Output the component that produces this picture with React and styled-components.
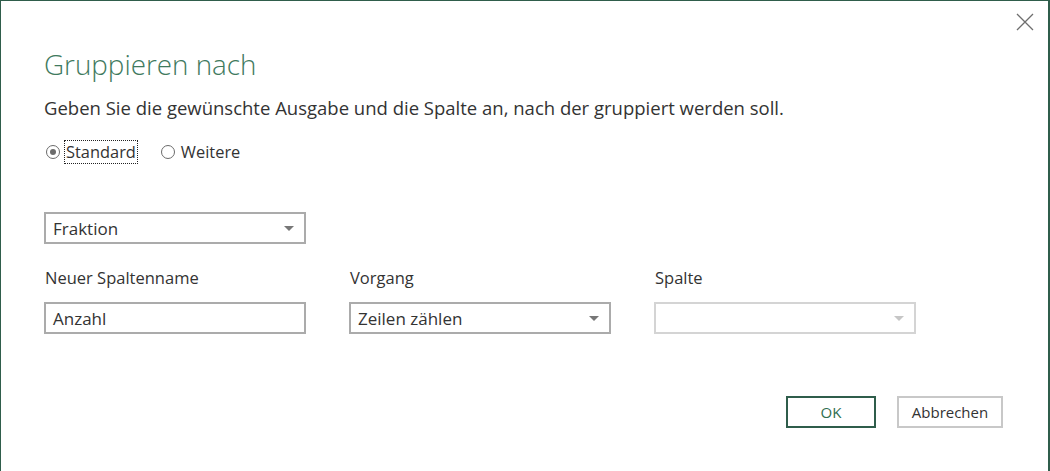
import React, { useState } from "react";
import styled, { createGlobalStyle } from "styled-components";

const Global = createGlobalStyle`
  html, body {
    margin: 0;
    padding: 0;
    background: #ffffff;
  }
  body {
    font-family: "Open Sans", "Noto Sans", "Liberation Sans", sans-serif;
    color: #333333;
  }
`;

const Dialog = styled.div`
  box-sizing: border-box;
  width: 1050px;
  height: 471px;
  border: 1px solid #2f5d4b;
  border-bottom: none;
  border-right-width: 2px;
  background: #ffffff;
  position: relative;
  padding: 44px 0 0 43px;
`;

const Close = styled.button`
  position: absolute;
  top: 11px;
  right: 13px;
  width: 20px;
  height: 20px;
  padding: 0;
  border: none;
  background: transparent;
  cursor: pointer;
  display: flex;
  align-items: center;
  justify-content: center;
`;

const Title = styled.h1`
  margin: 0;
  font-weight: 300;
  font-size: 27.8px;
  line-height: 38px;
  color: #3f7a5e;
`;

const Lead = styled.p`
  margin: 12px 0 0;
  font-size: 18.5px;
  line-height: 26px;
  color: #333333;
`;

const RadioRow = styled.div`
  display: flex;
  gap: 24px;
  margin-top: 20px;
  padding-left: 2px;
  font-size: 16.4px;
  line-height: 22px;
`;

const RadioLabel = styled.label`
  display: flex;
  align-items: center;
  gap: 5px;
  cursor: pointer;
`;

const Dot = styled.span`
  box-sizing: border-box;
  width: 14px;
  height: 14px;
  border-radius: 50%;
  border: 1px solid #6b6b6b;
  display: flex;
  align-items: center;
  justify-content: center;
  &::after {
    content: "";
    width: 6px;
    height: 6px;
    border-radius: 50%;
    background: ${(p) => (p.checked ? "#6b6b6b" : "transparent")};
  }
`;

const RadioText = styled.span`
  outline: ${(p) => (p.focused ? "1px dotted #222" : "none")};
  padding: 0 1px;
`;

const Field = styled.div`
  box-sizing: border-box;
  width: 262px;
  height: 32px;
  border: 2px solid ${(p) => (p.disabled ? "#d4d4d4" : "#ababab")};
  display: flex;
  align-items: center;
  justify-content: space-between;
  padding: 0 10px 0 7px;
  font-size: 17px;
  color: #333333;
  background: #ffffff;
`;

const Caret = styled.span`
  width: 0;
  height: 0;
  border-left: 5px solid transparent;
  border-right: 5px solid transparent;
  border-top: 5px solid ${(p) => (p.disabled ? "#c6c6c6" : "#777777")};
`;

const GroupBy = styled.div`
  margin-top: 49px;
`;

const Columns = styled.div`
  display: grid;
  grid-template-columns: repeat(3, 262px);
  column-gap: 43px;
  margin-top: 22px;
`;

const Column = styled.div`
  display: flex;
  flex-direction: column;
  gap: 12px;
`;

const Label = styled.div`
  font-size: 16.5px;
  line-height: 24px;
  padding-left: 1px;
  color: #333333;
`;

const Footer = styled.div`
  display: flex;
  justify-content: flex-end;
  gap: 21px;
  margin-top: 62px;
  padding-right: 45px;
`;

const Button = styled.button`
  box-sizing: border-box;
  height: 32px;
  width: ${(p) => (p.primary ? "90px" : "106px")};
  border: 2px solid ${(p) => (p.primary ? "#2f5d4b" : "#c8c8c8")};
  background: #ffffff;
  color: ${(p) => (p.primary ? "#2f6e50" : "#333333")};
  font-family: inherit;
  font-size: 15px;
  padding: 0;
  cursor: pointer;
`;

const Select = ({ value, disabled }) => (
  <Field disabled={disabled}>
    <span>{value}</span>
    <Caret disabled={disabled} />
  </Field>
);

const App = () => {
  const [mode, setMode] = useState("standard");
  return (
    <>
      <Global />
      <Dialog>
        <Close aria-label="Schließen">
          <svg width="18" height="18" viewBox="0 0 18 18">
            <path d="M1 1 L17 17 M17 1 L1 17" stroke="#6e6e6e" strokeWidth="1.3" fill="none" />
          </svg>
        </Close>
        <Title>Gruppieren nach</Title>
        <Lead>Geben Sie die gewünschte Ausgabe und die Spalte an, nach der gruppiert werden soll.</Lead>
        <RadioRow>
          <RadioLabel onClick={() => setMode("standard")}>
            <Dot checked={mode === "standard"} />
            <RadioText focused={mode === "standard"}>Standard</RadioText>
          </RadioLabel>
          <RadioLabel onClick={() => setMode("weitere")}>
            <Dot checked={mode === "weitere"} />
            <RadioText focused={mode === "weitere"}>Weitere</RadioText>
          </RadioLabel>
        </RadioRow>
        <GroupBy>
          <Select value="Fraktion" />
        </GroupBy>
        <Columns>
          <Column>
            <Label>Neuer Spaltenname</Label>
            <Field>Anzahl</Field>
          </Column>
          <Column>
            <Label>Vorgang</Label>
            <Select value="Zeilen zählen" />
          </Column>
          <Column>
            <Label>Spalte</Label>
            <Select value="" disabled />
          </Column>
        </Columns>
        <Footer>
          <Button primary>OK</Button>
          <Button>Abbrechen</Button>
        </Footer>
      </Dialog>
    </>
  );
};

export default App;
